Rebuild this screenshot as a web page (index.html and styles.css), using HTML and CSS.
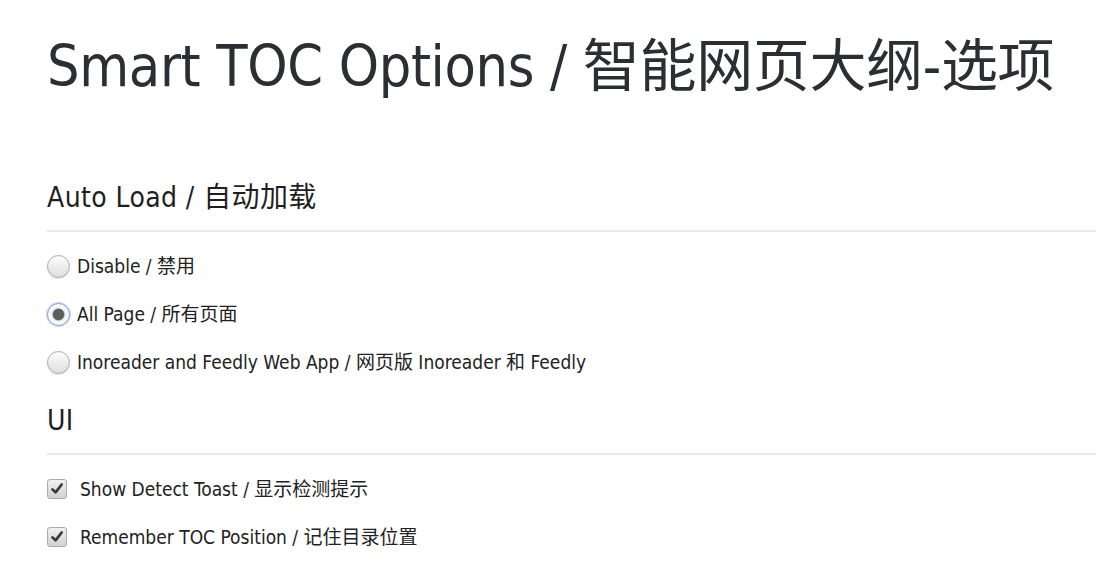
FILE: index.html
```html
<!DOCTYPE html>
<html lang="zh-CN">
<head>
<meta charset="utf-8">
<title>Smart TOC Options</title>
<link rel="stylesheet" href="styles.css">
</head>
<body>
<main class="page">
  <h1 class="title">Smart TOC Options / 智能网页大纲-选项</h1>

  <section class="section section-first">
    <h2 class="section-title">Auto Load / 自动加载</h2>
    <div class="options">
      <label class="option">
        <input class="radio" type="radio" name="autoload" value="disable">
        <span class="option-text">Disable / 禁用</span>
      </label>
      <label class="option">
        <input class="radio" type="radio" name="autoload" value="all" checked>
        <span class="option-text">All Page / 所有页面</span>
      </label>
      <label class="option">
        <input class="radio" type="radio" name="autoload" value="reader">
        <span class="option-text">Inoreader and Feedly Web App / 网页版 Inoreader 和 Feedly</span>
      </label>
    </div>
  </section>

  <section class="section">
    <h2 class="section-title">UI</h2>
    <div class="options">
      <label class="option">
        <span class="checkbox">
          <svg viewBox="0 0 20 20" width="20" height="20" aria-hidden="true"><path d="M5 10.4 L8.4 13.8 L15.2 5" fill="none" stroke="#383838" stroke-width="3" stroke-linecap="round" stroke-linejoin="round"/></svg>
        </span>
        <span class="option-text">Show Detect Toast / 显示检测提示</span>
      </label>
      <label class="option">
        <span class="checkbox">
          <svg viewBox="0 0 20 20" width="20" height="20" aria-hidden="true"><path d="M5 10.4 L8.4 13.8 L15.2 5" fill="none" stroke="#383838" stroke-width="3" stroke-linecap="round" stroke-linejoin="round"/></svg>
        </span>
        <span class="option-text">Remember TOC Position / 记住目录位置</span>
      </label>
    </div>
  </section>
</main>
</body>
</html>
```

FILE: styles.css
```css
html, body {
  margin: 0;
  padding: 0;
  background: #ffffff;
}

body {
  font-family: "DejaVu Sans Condensed", "DejaVu Sans", "Noto Sans CJK SC", sans-serif;
  font-stretch: condensed;
  color: #222222;
  overflow: hidden;
}

.page {
  padding: 32px 0 0 47px;
}

.title {
  margin: 0;
  font-size: 57px;
  line-height: 68px;
  font-weight: normal;
  letter-spacing: -0.35px;
  color: #2b2e33;
  white-space: nowrap;
}

.section {
  margin-top: 18px;
}

.section-first {
  margin-top: 81px;
}

.section-title {
  margin: 0;
  font-size: 28px;
  line-height: 34px;
  letter-spacing: 0.4px;
  font-weight: normal;
  color: #1f1f1f;
  padding-bottom: 15px;
  border-bottom: 2px solid #e9e9e9;
}

.options {
  display: flex;
  flex-direction: column;
  margin-top: 10px;
}

.option {
  display: flex;
  align-items: center;
  height: 48px;
  font-size: 19px;
  color: #222222;
}

.radio {
  appearance: none;
  -webkit-appearance: none;
  margin: 0 7px 0 0;
  width: 23px;
  height: 23px;
  border-radius: 50%;
  border: 1px solid #a9a9a9;
  background: linear-gradient(#fdfdfd, #dedede);
  box-shadow: inset 0 1px 1px rgba(255, 255, 255, 0.9), 0 1px 1px rgba(0, 0, 0, 0.1);
  flex: none;
}

.radio:checked {
  border-color: #7d9be0;
  box-shadow: 0 0 0 1px #c8d6f4, inset 0 0 0 2px #ffffff;
  background: radial-gradient(circle, #5d5d5d 0 5px, #7a7a7a 5.5px, #f4f4f4 6.5px, #e6e6e6 100%);
}

.checkbox {
  flex: none;
  width: 20px;
  height: 20px;
  box-sizing: border-box;
  border: 1px solid #ababab;
  border-radius: 3px;
  background: linear-gradient(#f0f0f0, #d2d2d2);
  display: flex;
  align-items: center;
  justify-content: center;
  margin-right: 13px;
}

.checkbox svg {
  display: block;
}

.option-text {
  white-space: nowrap;
  line-height: 24px;
}
```
